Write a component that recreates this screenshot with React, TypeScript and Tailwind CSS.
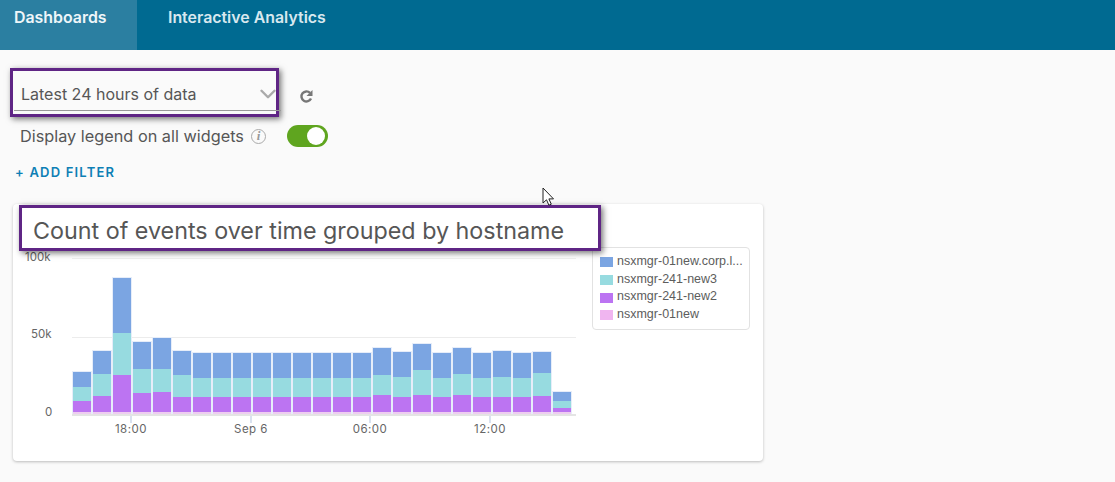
import { ChevronDown } from 'lucide-react';

// segment boundaries measured from the baseline, in px: [top, blue/teal, teal/purple]
const bars: number[][] = [
  [42, 27, 13],
  [63, 40, 18],
  [136, 81, 39],
  [72, 45, 21],
  [76, 45, 22],
  [63, 39, 17],
  [61, 36, 17],
  [61, 36, 17],
  [61, 36, 17],
  [61, 36, 17],
  [61, 36, 17],
  [61, 36, 17],
  [61, 36, 17],
  [61, 36, 17],
  [61, 36, 17],
  [66, 39, 19],
  [62, 37, 17],
  [70, 44, 19],
  [61, 36, 17],
  [66, 40, 19],
  [61, 36, 17],
  [63, 37, 17],
  [61, 36, 17],
  [62, 41, 18],
  [22, 13, 6],
];

const legend = [
  { name: 'nsxmgr-01new.corp.l...', color: 'bg-[#7ba5e2]' },
  { name: 'nsxmgr-241-new3', color: 'bg-[#97dbe0]' },
  { name: 'nsxmgr-241-new2', color: 'bg-[#bc74f2]' },
  { name: 'nsxmgr-01new', color: 'bg-[#f0b5f0]' },
];

const ticks = [
  { label: '18:00', left: 'left-[59px]' },
  { label: 'Sep 6', left: 'left-[179px]' },
  { label: '06:00', left: 'left-[298px]' },
  { label: '12:00', left: 'left-[418px]' },
];

function Chart() {
  return (
    <div className="relative ml-[59px] mt-[7px] h-[190px] w-[504px]">
      <div className="absolute left-0 top-0 h-px w-full bg-[#f0f0f0]" />
      <div className="absolute left-0 top-[79px] h-px w-full bg-[#ececec]" />
      <span className="absolute left-[-47px] top-[-9px] text-[11.5px] text-[#666]">100k</span>
      <span className="absolute left-[-41px] top-[68px] text-[11.5px] text-[#666]">50k</span>
      <span className="absolute left-[-27px] top-[146px] text-[11.5px] text-[#666]">0</span>

      <div className="absolute bottom-[34px] left-px flex items-end gap-[2.5px]">
        {bars.map((b, i) => (
          <div key={i} className="flex w-[17.5px] flex-col shadow-[0_0_0_1px_#e6edf9]" style={{ height: b[0] }}>
            <div className="bg-[#7ba5e2]" style={{ height: b[0] - b[1] }} />
            <div className="bg-[#97dbe0]" style={{ height: b[1] - b[2] }} />
            <div className="bg-[#bc74f2]" style={{ height: b[2] - 2 }} />
            <div className="h-[2px] bg-[#eecdf0]" />
          </div>
        ))}
      </div>

      <div className="absolute bottom-[32px] left-0 h-[2px] w-full bg-[#e4e4e4]" />
      {ticks.map((t) => (
        <div key={t.label} className={`absolute top-[158px] ${t.left} flex w-0 flex-col items-center`}>
          <div className="h-[7px] w-[2px] shrink-0 bg-[#d9e2f0]" />
          <span className="-mt-[1.5px] whitespace-nowrap text-[11.5px] tracking-[0.5px] text-[#666]">{t.label}</span>
        </div>
      ))}
    </div>
  );
}

export default function App() {
  return (
    <div className="relative h-[482px] w-[1115px] overflow-hidden bg-[#fafafa] font-['Inter',sans-serif] text-[#565656]">
      <nav className="flex h-[50px] bg-[#006a91] text-[15.9px] font-semibold leading-[18px] text-[#d8e8ef]">
        <div className="w-[137px] bg-[#2b7fa1] pl-[14px] pt-[9px] text-[#eef6f9]">Dashboards</div>
        <div className="pl-[31px] pt-[9px]">Interactive Analytics</div>
      </nav>

      <div className="ml-[10px] mt-[18px] flex items-start">
        <div className="h-[49px] w-[269px] border-[3px] border-[#5f2585] bg-[#fafafa] pl-[1px] shadow-[2px_2px_6px_rgba(0,0,0,0.55)]">
          <div className="-mr-[5px] flex h-[40px] items-center justify-between border-b border-[#999] pl-[7px] pt-[7px] text-[16px]">
            <span>Latest 24 hours of data</span>
            <ChevronDown className="h-[26px] w-[26px] text-[#aaa]" strokeWidth={2.25} />
          </div>
        </div>
        <svg className="ml-[20px] mt-[21px]" width="15" height="15" viewBox="0 0 15 15" fill="none">
          <path d="M12 9.5a5 5 0 1 1-1-5.6" stroke="#777" strokeWidth="2.4" />
          <path d="M13.5 1v6h-6z" fill="#777" />
        </svg>
      </div>

      <div className="ml-[20px] mt-[7px] flex h-[24px] items-center text-[16.3px]">
        <span>Display legend on all widgets</span>
        <span className="ml-[7px] flex h-[15px] w-[15px] items-center justify-center rounded-full border-[1.5px] border-[#aaa] font-['Liberation_Serif',serif] text-[13px] font-bold italic text-[#999]">
          i
        </span>
        <div className="ml-[21px] flex h-[22px] w-[41px] items-center justify-end rounded-full bg-[#5fa51f] pr-[3px]">
          <div className="h-[18px] w-[18px] rounded-full bg-white" />
        </div>
      </div>

      <div className="ml-[15px] mt-[15px] text-[13px] font-semibold tracking-[1.2px] text-[#0d7fb5]">+ ADD FILTER</div>

      <section className="relative ml-[13px] mt-[21px] h-[257px] w-[750px] rounded-[4px] bg-white shadow-[0_1px_3px_rgba(0,0,0,0.25)]">
        <div className="h-[47px]" />
        <Chart />
        <div className="absolute left-[579px] top-[43px] h-[83px] w-[158px] rounded-[4px] border border-[#e2e2e2] pl-[7px] pt-[5px] font-['Liberation_Sans',sans-serif] text-[12.5px] text-[#5d5d5d]">
          {legend.map((l) => (
            <div key={l.name} className="flex h-[17.7px] items-center gap-[4px]">
              <span className={`mt-[2px] h-[10px] w-[13px] shrink-0 ${l.color}`} />
              <span className="whitespace-nowrap">{l.name}</span>
            </div>
          ))}
        </div>
        {/* annotation over the card title */}
        <div className="absolute left-[6px] top-[1px] flex h-[46px] w-[582px] items-center whitespace-nowrap border-[3px] border-[#5f2585] bg-white pl-[11px] pt-[8px] text-[23.3px] shadow-[2px_2px_6px_rgba(0,0,0,0.55)]">
          Count of events over time grouped by hostname
        </div>
      </section>

      {/* mouse pointer */}
      <svg className="absolute left-[542px] top-[187px]" width="14" height="20" viewBox="0 0 14 20">
        <path d="M1 1v15l3.5-3.2 2.4 5.4 2.4-1-2.4-5.3h4.6z" fill="#fff" stroke="#222" strokeWidth="1" />
      </svg>
    </div>
  );
}
